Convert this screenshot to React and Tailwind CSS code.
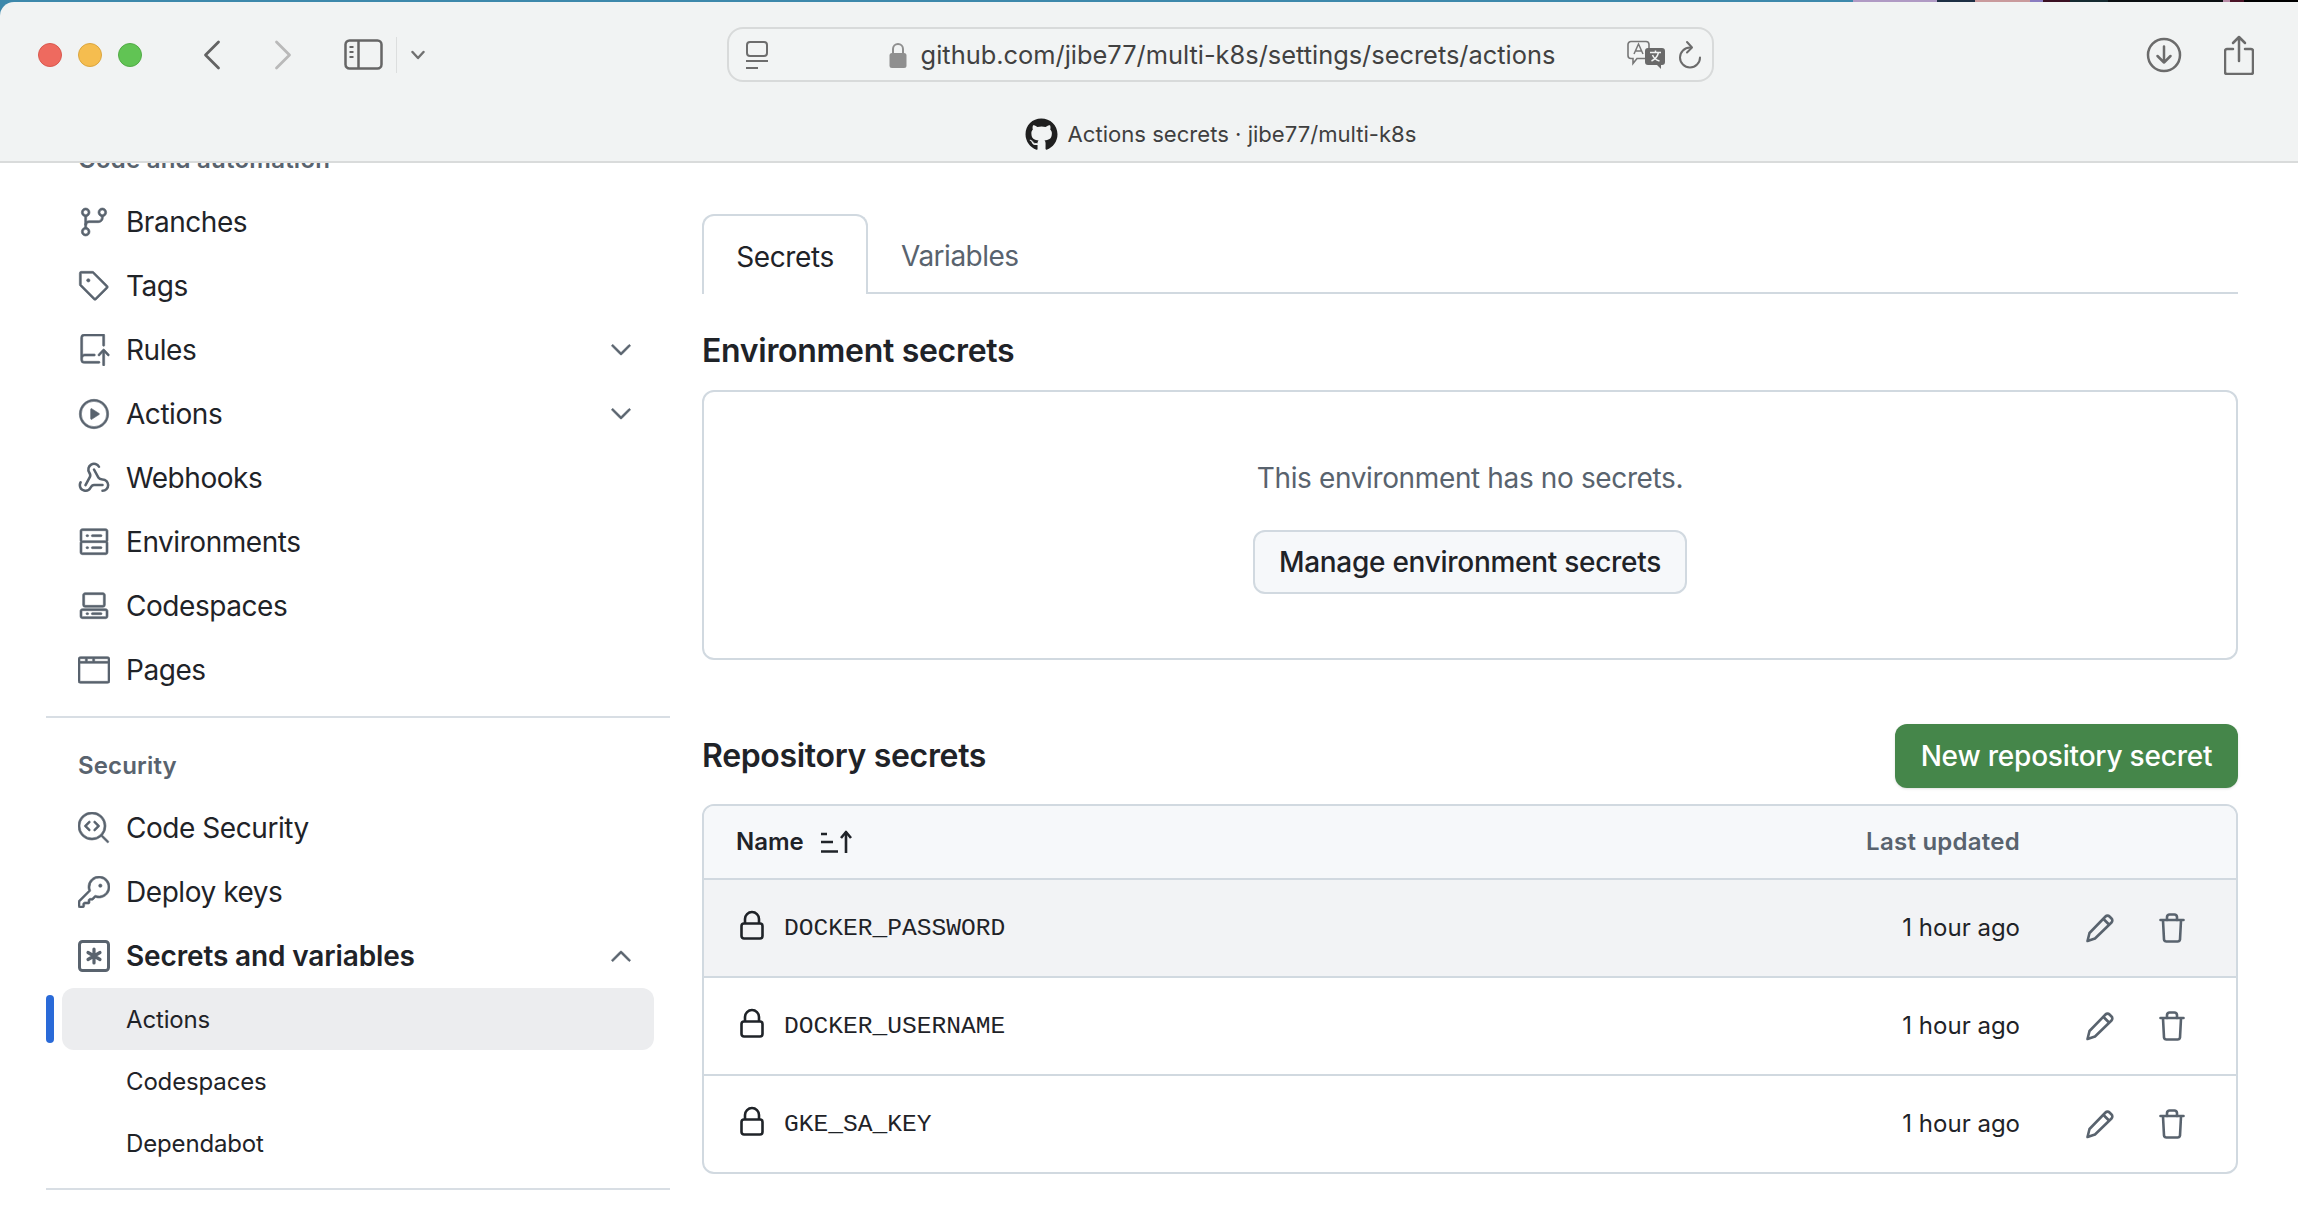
import {
  GoGitBranch, GoTag, GoRepoPush, GoPlay, GoServer, GoCodespaces, GoBrowser,
  GoCodescan, GoKey, GoChevronDown, GoChevronUp,
} from 'react-icons/go'
import { FaGithub } from 'react-icons/fa'
import { Webhook } from 'lucide-react'

const stripe = [
  ['w-[1853px]', 'bg-[#3d88ab]'],
  ['w-[84px]', 'bg-[#b09ac4]'],
  ['w-[38px]', 'bg-[#1d2f44]'],
  ['w-[55px]', 'bg-[#c99a9c]'],
  ['w-[13px]', 'bg-[#8a7cc0]'],
  ['w-[27px]', 'bg-[#3a0f22]'],
  ['w-[38px]', 'bg-[#152a30]'],
  ['w-[115px]', 'bg-[#0b0f12]'],
  ['w-[7px]', 'bg-[#b78aa5]'],
  ['w-[14px]', 'bg-[#4a1326]'],
  ['flex-1', 'bg-black'],
]

function WebhookIcon({ className }) {
  return <Webhook size={34} strokeWidth={1.8} className={className} />
}

function KeyAsteriskIcon({ size, className }) {
  return (
    <svg width={size} height={size} viewBox="0 0 16 16" fill="none" stroke="currentColor" className={className}>
      <rect x="0.75" y="0.75" width="14.5" height="14.5" rx="1.5" strokeWidth="1.5" />
      <path d="M8 4.5v7M5 6.25l6 3.5M11 6.25l-6 3.5" strokeWidth="1.6" strokeLinecap="round" />
    </svg>
  )
}

function LockIcon() {
  return (
    <svg width="24" height="30" viewBox="0 0 24 30" fill="none" stroke="#1f2328" strokeWidth="2.6" className="shrink-0 -mt-[6px]">
      <rect x="1.5" y="13.5" width="21" height="15" rx="2.5" />
      <path d="M5 13.5V9a7 7 0 0 1 14 0v4.5" />
    </svg>
  )
}

function PencilIcon() {
  return (
    <svg width="32" height="32" viewBox="0 0 32 32" fill="none" stroke="#59636e" strokeWidth="2.6" strokeLinejoin="round" className="ml-[64px]">
      <path d="M3.5 29l2-8L21.5 4.5a2.8 2.8 0 0 1 4 0l2 2a2.8 2.8 0 0 1 0 4L11 26.5z" />
      <path d="M19.5 7l5.5 5.5" />
    </svg>
  )
}

function TrashIcon() {
  return (
    <svg width="32" height="32" viewBox="0 0 32 32" fill="none" stroke="#59636e" strokeWidth="2.6" strokeLinecap="round" strokeLinejoin="round" className="ml-[40px]">
      <path d="M4.5 8h23" />
      <path d="M11 8V5a2.5 2.5 0 0 1 2.5-2.5h5A2.5 2.5 0 0 1 21 5v3" />
      <path d="M7 8.5l1 19a2.5 2.5 0 0 0 2.5 2h11a2.5 2.5 0 0 0 2.5-2l1-19" />
    </svg>
  )
}

function SortIcon() {
  return (
    <svg width="34" height="24" viewBox="0 0 34 24" fill="none" stroke="#1f2328" strokeWidth="2.6" className="ml-[17px]">
      <path d="M0 4h6M0 12h12M0 21.5h17" />
      <path d="M25 23V2" />
      <path d="M20 8l5-6 5 6" strokeLinejoin="round" />
    </svg>
  )
}

const mainNav = [
  { icon: GoGitBranch, label: 'Branches' },
  { icon: GoTag, label: 'Tags' },
  { icon: GoRepoPush, label: 'Rules', chevron: 'down' },
  { icon: GoPlay, label: 'Actions', chevron: 'down' },
  { icon: WebhookIcon, label: 'Webhooks' },
  { icon: GoServer, label: 'Environments' },
  { icon: GoCodespaces, label: 'Codespaces' },
  { icon: GoBrowser, label: 'Pages' },
]

const secrets = ['DOCKER_PASSWORD', 'DOCKER_USERNAME', 'GKE_SA_KEY']

function TabsIcon() {
  return (
    <svg width="24" height="28" viewBox="0 0 24 28" fill="none" stroke="#6d6d6d" strokeWidth="2">
      <rect x="2" y="1" width="20" height="14" rx="3" />
      <path d="M1 20h22M1 27h12" />
    </svg>
  )
}

function SidebarIcon() {
  return (
    <svg width="39" height="31" viewBox="0 0 39 31" fill="none" stroke="#666" strokeWidth="2.5">
      <rect x="1.5" y="1.5" width="36" height="28" rx="4" />
      <path d="M14.5 1.5v28" />
      <path d="M5.5 8h4M5.5 13h4M5.5 18h4" strokeWidth="2" />
    </svg>
  )
}

function TranslateIcon() {
  return (
    <svg width="39" height="30" viewBox="0 0 39 30" fill="none">
      <path d="M4 1.5h15a3 3 0 0 1 3 3v11a3 3 0 0 1-3 3h-9l-4 5v-5H4a3 3 0 0 1-3-3v-11a3 3 0 0 1 3-3z" stroke="#777" strokeWidth="1.6" />
      <path d="M7 14l4.5-10L16 14M8.5 11h6" stroke="#777" strokeWidth="1.5" />
      <path d="M21 8h14a3 3 0 0 1 3 3v11a3 3 0 0 1-3 3h-1v4l-4-4h-9a3 3 0 0 1-3-3V11a3 3 0 0 1 3-3z" fill="#6a6a6a" />
      <path d="M23 12.5h11M28.5 10.5v2M31.5 12.5c-1 4-4 7-7 8.5M25.5 15c1 2.5 3.5 5 7 6" stroke="#f1f3f3" strokeWidth="1.5" />
    </svg>
  )
}

function ReloadIcon() {
  return (
    <svg width="24" height="30" viewBox="0 0 24 30" fill="none" stroke="#6b6b6b" strokeWidth="2">
      <path d="M12 7.5a10 10 0 1 0 10 10" strokeLinecap="round" />
      <path d="M9 2l5 5.5-5 5" strokeLinecap="round" strokeLinejoin="round" />
    </svg>
  )
}

function Toolbar() {
  return (
    <div className="h-[161px] flex flex-col bg-[#f1f3f3] rounded-tl-[14px] border-b-2 border-[#d9dbdb]">
      <div className="h-[80px] pt-[25px] flex items-start">
        <div className="w-[727px] shrink-0 flex items-center h-[55px] pl-[38px]">
          <div className="flex gap-[16px]">
            <div className="w-[24px] h-[24px] rounded-full bg-[#ee6a5f] border border-[#d9584e]" />
            <div className="w-[24px] h-[24px] rounded-full bg-[#f5bd4f] border border-[#dba63f]" />
            <div className="w-[24px] h-[24px] rounded-full bg-[#61c454] border border-[#52ab46]" />
          </div>
          <svg className="ml-[61px]" width="18" height="30" viewBox="0 0 18 30" fill="none" stroke="#636363" strokeWidth="2.8" strokeLinecap="round" strokeLinejoin="round">
            <path d="M15.5 2L2.5 15l13 13" />
          </svg>
          <svg className="ml-[53px]" width="18" height="30" viewBox="0 0 18 30" fill="none" stroke="#b9b9b9" strokeWidth="2.8" strokeLinecap="round" strokeLinejoin="round">
            <path d="M2.5 2l13 13-13 13" />
          </svg>
          <div className="ml-[52px]"><SidebarIcon /></div>
          <div className="ml-[13px] w-px h-[36px] bg-[#dcdede]" />
          <svg className="ml-[14px]" width="14" height="10" viewBox="0 0 14 10" fill="none" stroke="#707070" strokeWidth="2.4" strokeLinecap="round" strokeLinejoin="round">
            <path d="M1.5 2l5.5 6 5.5-6" />
          </svg>
        </div>
        <div className="w-[987px] shrink-0 h-[55px] flex items-center border-2 border-[#d8dada] rounded-[16px] bg-[#f2f4f4] pl-[16px] pr-[10px]">
          <TabsIcon />
          <div className="flex-1 flex items-center justify-center gap-[14px] pl-[48px]">
            <svg width="18" height="26" viewBox="0 0 18 26" fill="#8f8f8f">
              <path d="M3 11V7a6 6 0 0 1 12 0v4h-2V7a4 4 0 0 0-8 0v4z" />
              <rect x="0.5" y="11" width="17" height="15" rx="2.5" />
            </svg>
            <span className="text-[25.4px] leading-none text-[#414141]">github.com/jibe77/multi-k8s/settings/secrets/actions</span>
          </div>
          <TranslateIcon />
          <div className="ml-[12px]"><ReloadIcon /></div>
        </div>
        <div className="flex-1 flex items-center justify-end h-[55px] pr-[44px] gap-[42px]">
          <svg width="36" height="36" viewBox="0 0 36 36" fill="none" stroke="#6b6b6b" strokeWidth="2.5" strokeLinecap="round" strokeLinejoin="round">
            <circle cx="18" cy="18" r="16" />
            <path d="M18 9.5v16M11.5 19l6.5 6.5 6.5-6.5" />
          </svg>
          <svg width="30" height="40" viewBox="0 0 30 40" fill="none" stroke="#6b6b6b" strokeWidth="2.5" strokeLinecap="round" strokeLinejoin="round">
            <path d="M9 14H3a2 2 0 0 0-2 2v21a2 2 0 0 0 2 2h24a2 2 0 0 0 2-2V16a2 2 0 0 0-2-2h-6" />
            <path d="M15 26V2M9 8l6-6 6 6" />
          </svg>
        </div>
      </div>
      <div className="ml-[727px] w-[987px] flex-1 flex items-center justify-center pt-[26px] gap-[10px]">
        <FaGithub size={33} color="#1f1f1f" />
        <span className="text-[22.1px] leading-none text-[#3f3f3f]">Actions secrets · jibe77/multi-k8s</span>
      </div>
    </div>
  )
}

function NavRow({ icon: Icon, label, chevron, bold }) {
  return (
    <div className="h-[64px] flex items-center pl-[32px] pr-[33px]">
      <div className="w-[32px] flex justify-center shrink-0">
        <Icon size={32} strokeWidth={0.45} className="text-[#59636e] shrink-0" />
      </div>
      <span className={`ml-[16px] flex-1 text-[28px] text-[#1f2328] ${bold ? 'font-semibold tracking-[-0.14px]' : 'tracking-[-0.45px]'}`}>{label}</span>
      {chevron === 'down' ? <GoChevronDown size={32} strokeWidth={0.5} className="text-[#59636e]" /> : null}
      {chevron === 'up' ? <GoChevronUp size={32} strokeWidth={0.5} className="text-[#59636e]" /> : null}
    </div>
  )
}

function Sidebar() {
  return (
    <div className="w-[624px] ml-[46px] shrink-0 -mt-[21px]">
      <div className="h-[36px] mb-[12px] pl-[32px] text-[24px] leading-[36px] font-semibold tracking-[0.23px] text-[#59636e]">Code and automation</div>
      {mainNav.map((n) => (
        <NavRow key={n.label} {...n} />
      ))}
      <div className="h-[2px] my-[14px] bg-[#d8dee4]" />
      <div className="h-[36px] mt-[30px] mb-[12px] pl-[32px] text-[24px] leading-[36px] font-semibold tracking-[0.15px] text-[#59636e]">Security</div>
      <NavRow icon={GoCodescan} label="Code Security" />
      <NavRow icon={GoKey} label="Deploy keys" />
      <NavRow icon={KeyAsteriskIcon} label="Secrets and variables" chevron="up" bold />
      <div className="flex items-center h-[62px]">
        <div className="w-[8px] h-[48px] rounded-full bg-[#2a6ad8]" />
        <div className="ml-[8px] w-[592px] h-[62px] pt-[2px] rounded-[12px] bg-[#ecedef] flex items-center pl-[64px] text-[24px] tracking-[-0.15px] text-[#1f2328]">Actions</div>
      </div>
      <div className="h-[62px] pt-[2px] flex items-center pl-[80px] text-[24px] tracking-[-0.15px] text-[#1f2328]">Codespaces</div>
      <div className="h-[62px] pt-[2px] flex items-center pl-[80px] text-[24px] tracking-[-0.15px] text-[#1f2328]">Dependabot</div>
      <div className="h-[2px] mt-[14px] bg-[#d8dee4]" />
    </div>
  )
}

function SecretRow({ name, hovered, last }) {
  return (
    <div className={`flex items-center pl-[32px] pr-[48px] ${hovered ? 'bg-[#f2f3f5]' : ''} ${last ? 'h-[96px]' : 'h-[98px] border-b-2 border-[#d1d9e0]'}`}>
      <div className="w-[32px] flex justify-center shrink-0"><LockIcon /></div>
      <span className="ml-[16px] pt-[2px] flex-1 text-[24.6px] text-[#1f2328] font-['Liberation_Mono',monospace]">{name}</span>
      <span className="text-[24px] text-[#1f2328]">1 hour ago</span>
      <PencilIcon />
      <TrashIcon />
    </div>
  )
}

function Main() {
  return (
    <div className="w-[1536px] ml-[32px] shrink-0 pt-[51px]">
      {/* Tabs */}
      <div className="h-[80px] flex">
        <div className="w-[166px] h-[80px] border-2 border-b-0 border-[#d1d9e0] rounded-t-[12px] flex items-center justify-center text-[28px] tracking-[-0.4px] text-[#1f2328] pt-[3px]">Secrets</div>
        <div className="flex-1 border-b-2 border-[#d1d9e0] flex items-center pl-[33px] text-[28px] tracking-[-0.5px] text-[#59636e] pt-[6px]">Variables</div>
      </div>

      <h2 className="mt-[34px] h-[46px] leading-[46px] text-[32px] font-semibold tracking-[-0.3px] text-[#1f2328]">Environment secrets</h2>
      <div className="mt-[16px] h-[270px] border-2 border-[#d1d9e0] rounded-[12px] flex flex-col items-center pt-[64px]">
        <p className="text-[28px] leading-[44px] tracking-[-0.37px] text-[#59636e]">This environment has no secrets.</p>
        <button className="mt-[30px] w-[434px] h-[64px] bg-[#f6f8fa] border-2 border-[#d1d9e0] rounded-[12px] text-[28px] font-medium tracking-[-0.28px] text-[#1f2328]">Manage environment secrets</button>
      </div>

      <div className="mt-[64px] h-[64px] flex items-center justify-between">
        <h2 className="text-[32px] font-semibold tracking-[-0.33px] text-[#1f2328]">Repository secrets</h2>
        <button className="w-[343px] h-[64px] rounded-[12px] bg-[#45864a] text-white text-[28px] font-medium tracking-[-0.2px] shadow-sm">New repository secret</button>
      </div>

      <div className="mt-[16px] border-2 border-[#d1d9e0] rounded-[12px] overflow-hidden">
        <div className="h-[74px] bg-[#f6f8fa] border-b-2 border-[#d1d9e0] flex items-center pl-[32px] pr-[216px]">
          <span className="text-[24px] font-semibold text-[#1f2328]">Name</span>
          <SortIcon />
          <span className="ml-auto text-[24px] font-semibold tracking-[0.25px] text-[#59636e]">Last updated</span>
        </div>
        {secrets.map((s, i) => (
          <SecretRow key={s} name={s} hovered={i === 0} last={i === secrets.length - 1} />
        ))}
      </div>
    </div>
  )
}

export default function App() {
  return (
    <div className="w-[2298px] h-[1218px] overflow-hidden bg-white font-['Inter',sans-serif] flex flex-col">
      <div>
        <div className="h-[2px] flex">
          {stripe.map(([w, c], i) => (
            <div key={i} className={`${w} ${c}`} />
          ))}
        </div>
        <div className="bg-[#3d88ab]">
          <Toolbar />
        </div>
      </div>
      <div className="flex-1 flex overflow-hidden">
        <Sidebar />
        <Main />
      </div>
    </div>
  )
}
